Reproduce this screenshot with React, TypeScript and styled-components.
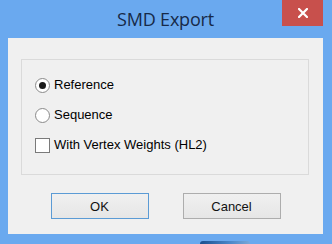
import React from "react";
import styled, { createGlobalStyle } from "styled-components";

const Global = createGlobalStyle`
  html, body { margin: 0; padding: 0; background: #6aa9ef; }
  * { box-sizing: border-box; }
`;

const Window = styled.div`
  width: 332px;
  height: 244px;
  background: #6aa9ef;
  display: flex;
  flex-direction: column;
  padding: 0 9px 0 8px;
`;

const TitleBar = styled.div`
  height: 38px;
  display: grid;
  grid-template-columns: 1fr auto 1fr;
  align-items: start;
`;

const Title = styled.div`
  grid-column: 2;
  margin-top: 8px;
  font-family: "Open Sans", "Noto Sans", sans-serif;
  font-size: 18px;
  line-height: 22px;
  color: #172a48;
  letter-spacing: -0.2px;
`;

const Close = styled.div`
  grid-column: 3;
  justify-self: end;
  width: 41px;
  height: 26px;
  background: #c8504c;
  display: flex;
  align-items: center;
  justify-content: center;
`;

const Client = styled.div`
  height: 196px;
  background: #f0f0f0;
  display: flex;
  flex-direction: column;
  padding: 21px 14px 0 13px;
  font-family: "Liberation Sans", Arial, sans-serif;
  font-size: 13px;
  color: #000;
`;

const Group = styled.div`
  height: 116px;
  border: 1px solid #dadada;
  display: flex;
  flex-direction: column;
  gap: 14px;
  padding: 17px 0 0 13px;
`;

const Option = styled.label`
  height: 16px;
  display: flex;
  align-items: center;
  gap: 4px;
  line-height: 16px;
`;

const Radio = styled.span<{ $checked?: boolean }>`
  width: 15px;
  height: 15px;
  border-radius: 50%;
  border: 1px solid #8a8a8a;
  background: #fff;
  display: flex;
  align-items: center;
  justify-content: center;
  &::after {
    content: "";
    width: 7px;
    height: 7px;
    border-radius: 50%;
    background: ${(p) => (p.$checked ? "#1a1a1a" : "transparent")};
  }
`;

const Check = styled.span`
  width: 15px;
  height: 15px;
  border: 1px solid #7a7a7a;
  background: #fff;
`;

const Buttons = styled.div`
  display: flex;
  justify-content: center;
  gap: 34px;
  margin-top: 18px;
  padding-left: 1px;
`;

const Button = styled.div<{ $default?: boolean }>`
  width: 98px;
  height: 26px;
  border: 1px solid ${(p) => (p.$default ? "#5b9bd5" : "#adadad")};
  background: linear-gradient(#f0f0f0, #e6e6e6);
  display: flex;
  align-items: center;
  justify-content: center;
  font-size: 13px;
  color: #111;
`;

const Foot = styled.div`
  flex: 1;
  display: flex;
  align-items: flex-end;
  padding-left: 192px;
`;

const Glow = styled.div`
  width: 50px;
  height: 3px;
  border-radius: 3px 3px 0 0;
  background: linear-gradient(90deg, #1b4f8f, #4b87c9 60%, #7aa8d8);
`;

export default function App() {
  return (
    <>
      <Global />
      <Window>
        <TitleBar>
          <Title>SMD Export</Title>
          <Close>
            <svg width="10" height="10" viewBox="0 0 10 10">
              <path d="M1 1 L9 9 M9 1 L1 9" stroke="#fff" strokeWidth="2.2" strokeLinecap="square" />
            </svg>
          </Close>
        </TitleBar>
        <Client>
          <Group>
            <Option>
              <Radio $checked />
              Reference
            </Option>
            <Option>
              <Radio />
              Sequence
            </Option>
            <Option>
              <Check />
              With Vertex Weights (HL2)
            </Option>
          </Group>
          <Buttons>
            <Button $default>OK</Button>
            <Button>Cancel</Button>
          </Buttons>
        </Client>
        <Foot>
          <Glow />
        </Foot>
      </Window>
    </>
  );
}
